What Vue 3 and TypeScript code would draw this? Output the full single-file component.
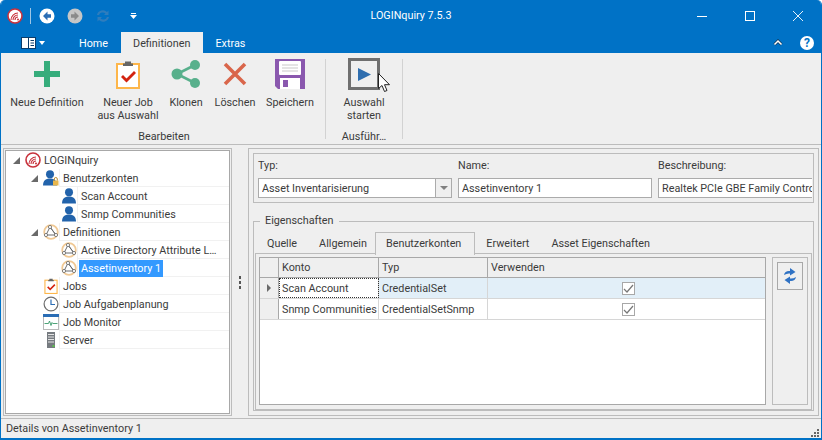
<script setup lang="ts">
import { ref } from 'vue'

interface TreeRow {
  label: string
  level: number
  icon: string
  arrow?: boolean
  selected?: boolean
}

interface RibbonItem {
  lines: string[]
  icon: string
  width: number
}

const treeRows: TreeRow[] = [
  { label: 'LOGINquiry', level: 0, icon: 'logo', arrow: true },
  { label: 'Benutzerkonten', level: 1, icon: 'userlock', arrow: true },
  { label: 'Scan Account', level: 2, icon: 'user' },
  { label: 'Snmp Communities', level: 2, icon: 'user' },
  { label: 'Definitionen', level: 1, icon: 'net', arrow: true },
  { label: 'Active Directory Attribute L…', level: 2, icon: 'net' },
  { label: 'Assetinventory 1', level: 2, icon: 'net', selected: true },
  { label: 'Jobs', level: 1, icon: 'job' },
  { label: 'Job Aufgabenplanung', level: 1, icon: 'clock' },
  { label: 'Job Monitor', level: 1, icon: 'monitor' },
  { label: 'Server', level: 1, icon: 'server' },
]

const editItems: RibbonItem[] = [
  { lines: ['Neue Definition'], icon: 'plus', width: 88 },
  { lines: ['Neuer Job', 'aus Auswahl'], icon: 'job', width: 74 },
  { lines: ['Klonen'], icon: 'share', width: 42 },
  { lines: ['Löschen'], icon: 'cross', width: 56 },
  { lines: ['Speichern'], icon: 'save', width: 54 },
]

const tabs = ['Quelle', 'Allgemein', 'Benutzerkonten', 'Erweitert', 'Asset Eigenschaften']
const ribbonTabs = ['Home', 'Definitionen', 'Extras']
const activeTab = ref('Benutzerkonten')
const activeRibbon = ref('Definitionen')

const gridRows = [
  { konto: 'Scan Account', typ: 'CredentialSet', current: true },
  { konto: 'Snmp Communities', typ: 'CredentialSetSnmp', current: false },
]
</script>

<template>
  <div class="Window">
    <svg class="defs">
      <symbol id="i-logo" viewBox="0 0 16 16">
        <circle cx="8" cy="8" r="7" fill="#fff" stroke="#c8323c" stroke-width="1.6"/>
        <path d="M4 12a7 7 0 0 1 7-7M6 12a5 5 0 0 1 5-5M8 12a3 3 0 0 1 3-3" fill="none" stroke="#c8323c" stroke-width="1.1"/>
        <circle cx="11" cy="11.5" r="1" fill="#c8323c"/>
      </symbol>
      <symbol id="i-user" viewBox="0 0 16 16">
        <circle cx="8" cy="4.2" r="4" fill="#2263ab"/>
        <path d="M1 15.500c0-4.500 2.500-7 7-7s7 2.500 7 7z" fill="#2263ab"/>
      </symbol>
      <symbol id="i-userlock" viewBox="0 0 16 16">
        <circle cx="7" cy="4.200" r="4" fill="#2263ab"/>
        <path d="M0 15.500c0-4.500 2.500-7 7-7s7 2.500 7 7z" fill="#2263ab"/>
        <rect x="10" y="10.500" width="5.500" height="5" fill="#e8b64c"/>
        <path d="M11.300 10.500V9a1.500 1.500 0 0 1 3 0v1.500" fill="none" stroke="#b98b2e"/>
      </symbol>
      <symbol id="i-net" viewBox="0 0 16 16">
        <circle cx="8" cy="8" r="6.800" fill="none" stroke="#f0c995" stroke-width="1.800"/>
        <path d="M7 3l-4 8h10zM7 3l6 8" fill="none" stroke="#6d6d6d" stroke-width="1"/>
        <circle cx="7" cy="3" r="1.600" fill="#fff" stroke="#666" stroke-width=".8"/>
        <circle cx="3" cy="11" r="1.600" fill="#fff" stroke="#666" stroke-width=".8"/>
        <circle cx="13" cy="11" r="1.600" fill="#fff" stroke="#666" stroke-width=".8"/>
      </symbol>
      <symbol id="i-job" viewBox="0 0 24 29">
        <rect x="1" y="4" width="22" height="24" fill="#fff" stroke="#fdb64a" stroke-width="2"/>
        <path d="M9 3.500V1.500h6v2h2V6H7V3.500z" fill="#666"/>
        <path d="M5 17l2-2 3.500 3.500L18 11l2 2-9.500 9.500z" fill="#d3230f"/>
      </symbol>
      <symbol id="i-clock" viewBox="0 0 16 16">
        <circle cx="8" cy="8" r="6.900" fill="#fff" stroke="#6d6d6d" stroke-width="1.200"/>
        <path d="M8 3.500V8.500h4" fill="none" stroke="#2a6db5" stroke-width="1.200"/>
      </symbol>
      <symbol id="i-monitor" viewBox="0 0 16 16">
        <rect x=".5" y=".5" width="15" height="15" fill="#fff" stroke="#b9b9b9"/>
        <rect x="0" y="0" width="16" height="3" fill="#2a6db5"/>
        <path d="M1.500 9.500h4l1-2.500 1.500 4.500 1-3 .8 1h4.700" fill="none" stroke="#3a9a6a" stroke-width=".9"/>
      </symbol>
      <symbol id="i-server" viewBox="0 0 16 16">
        <rect x="4" y="0" width="8" height="16" fill="#767b80"/>
        <path d="M5 2.500h6M5 5h6M5 7.500h6M5 10h6" stroke="#e5e5e5" stroke-width="1"/>
        <rect x="9.500" y="13" width="2" height="2" fill="#5ac24a"/>
      </symbol>
      <symbol id="i-plus" viewBox="0 0 26 26">
        <path d="M10 0h6v10h10v6H16v10h-6V16H0v-6h10z" fill="#36ac7b"/>
      </symbol>
      <symbol id="i-share" viewBox="0 0 30 30">
        <path d="M24 6L6 15l18 9" fill="none" stroke="#58b08c" stroke-width="2.600"/>
        <circle cx="24" cy="6" r="5" fill="#58b08c"/>
        <circle cx="6" cy="15" r="5.500" fill="#58b08c"/>
        <circle cx="24" cy="24" r="5" fill="#58b08c"/>
      </symbol>
      <symbol id="i-cross" viewBox="0 0 24 24">
        <path d="M2 2l20 20M22 2L2 22" fill="none" stroke="#d9664b" stroke-width="3.600"/>
      </symbol>
      <symbol id="i-save" viewBox="0 0 30 30">
        <path d="M0 0h30v30H3l-3-3z" fill="#8a58ae"/>
        <rect x="4" y="2" width="22" height="14" rx="1" fill="#fff"/>
        <path d="M7 6h16M7 9h16M7 12h16" stroke="#c9c9c9"/>
        <rect x="5" y="19" width="20" height="11" fill="#fff"/>
        <rect x="8" y="21" width="5" height="7" fill="#8a58ae"/>
      </symbol>
    </svg>

    <header class="Titlebar">
      <div class="qat">
        <svg class="qat-logo" width="16" height="16"><use href="#i-logo"/></svg>
        <span class="qat-sep"></span>
        <svg class="qat-btn" width="16" height="16" viewBox="0 0 16 16">
          <circle cx="8" cy="8" r="7.500" fill="#fff"/>
          <path d="M8.500 3.500L4 8l4.500 4.500V9.800H12V6.200H8.500z" fill="#2a6db5"/>
        </svg>
        <svg class="qat-btn" width="16" height="16" viewBox="0 0 16 16">
          <circle cx="8" cy="8" r="7.500" fill="#c6c6c6"/>
          <path d="M7.500 3.500L12 8l-4.500 4.500V9.800H4V6.200h3.500z" fill="#8a8a8a"/>
        </svg>
        <svg class="qat-btn" width="16" height="16" viewBox="0 0 16 16">
          <path d="M2 7a6 6 0 0 1 10-3l1.500-1.500V7H9l1.500-1.500A4 4 0 0 0 4 7zM14 9a6 6 0 0 1-10 3l-1.500 1.500V9H7l-1.500 1.500A4 4 0 0 0 12 9z" fill="#2f7dbd"/>
        </svg>
        <svg class="qat-more" width="7" height="6" viewBox="0 0 7 6">
          <path d="M1 0h5v1H1zM0 2h7L3.500 6z" fill="#fff"/>
        </svg>
      </div>
      <span class="title">LOGINquiry 7.5.3</span>
      <div class="wincontrols">
        <svg width="10" height="10" viewBox="0 0 10 10"><path d="M0 5.500h10" stroke="#fff"/></svg>
        <svg width="10" height="10" viewBox="0 0 10 10"><rect x=".5" y=".5" width="9" height="9" fill="none" stroke="#fff"/></svg>
        <svg width="10" height="10" viewBox="0 0 10 10"><path d="M0 0l10 10M10 0L0 10" stroke="#fff" stroke-width=".9"/></svg>
      </div>
    </header>

    <nav class="Ribbontabs">
      <div class="appmenu">
        <svg width="15" height="12" viewBox="0 0 15 12">
          <rect x=".5" y=".5" width="14" height="11" fill="#fff" stroke="#0b3c6a"/>
          <path d="M7.500 1v10M9.500 3.500h3.500M9.500 6h3.500M9.500 8.500h3.500" stroke="#0b3c6a"/>
        </svg>
        <svg width="6" height="4" viewBox="0 0 6 4"><path d="M0 0h6L3 4z" fill="#fff"/></svg>
      </div>
      <span
        v-for="t in ribbonTabs"
        :key="t"
        class="rtab"
        :class="{ active: t === activeRibbon }"
      >{{ t }}</span>
      <div class="ribbon-right">
        <svg width="10" height="7" viewBox="0 0 10 7"><path d="M1.500 5.500L5 2l3.500 3.500" fill="none" stroke="#123a5c" stroke-width="3"/><path d="M1.500 5.500L5 2l3.500 3.500" fill="none" stroke="#fff" stroke-width="1.500"/></svg>
        <span class="help">?</span>
      </div>
    </nav>

    <section class="Ribbon">
      <div class="rgroup edit">
        <div class="ritems">
          <div v-for="it in editItems" :key="it.icon" class="ritem" :style="{ width: it.width + 'px' }">
            <div class="ricon">
              <svg :class="'ic-' + it.icon"><use :href="'#i-' + it.icon"/></svg>
            </div>
            <span v-for="l in it.lines" :key="l">{{ l }}</span>
          </div>
        </div>
        <div class="rlabel">Bearbeiten</div>
      </div>
      <div class="rgroup run">
        <div class="ritems">
          <div class="ritem runitem">
            <div class="ricon">
              <div class="playbox">
                <svg width="13" height="13" viewBox="0 0 13 13"><path d="M0 0l13 6.500L0 13z" fill="#2f6eaf"/></svg>
              </div>
            </div>
            <span>Auswahl</span>
            <span>starten</span>
          </div>
        </div>
        <div class="rlabel">Ausführ…</div>
        <svg class="cursor" width="12" height="20" viewBox="0 0 12 20">
          <path d="M.5.500v15l3.500-3 2.500 6 2.500-1-2.500-5.800h5z" fill="#fff" stroke="#222"/>
        </svg>
      </div>
    </section>

    <main class="Body">
      <aside class="Tree">
        <div class="tree-inner">
          <div
            v-for="r in treeRows"
            :key="r.label"
            class="trow"
            :class="'lvl' + r.level"
          >
            <span class="arrow" :class="{ on: r.arrow }"></span>
            <svg class="ticon"><use :href="'#i-' + r.icon"/></svg>
            <span class="tcell"><span class="tlabel" :class="{ selected: r.selected }">{{ r.label }}</span></span>
          </div>
        </div>
      </aside>

      <div class="Splitter"><i></i><i></i><i></i></div>

      <div class="Detail">
        <div class="fields">
          <div class="field typ">
            <label>Typ:</label>
            <div class="combo">
              <span class="val">Asset Inventarisierung</span>
              <span class="drop"><i></i></span>
            </div>
          </div>
          <div class="field name">
            <label>Name:</label>
            <div class="combo"><span class="val">Assetinventory 1</span></div>
          </div>
          <div class="field desc">
            <label>Beschreibung:</label>
            <div class="combo open"><span class="val">Realtek PCIe GBE Family Controller</span></div>
          </div>
        </div>

        <fieldset class="props">
          <legend>Eigenschaften</legend>
          <div class="tabs">
            <span
              v-for="t in tabs"
              :key="t"
              class="tab"
              :class="{ active: t === activeTab }"
            >{{ t }}</span>
          </div>
          <div class="tabpage">
            <div class="grid">
              <div class="grow head">
                <span class="c0"></span>
                <span class="c1">Konto</span>
                <span class="c2">Typ</span>
                <span class="c3">Verwenden</span>
              </div>
              <div
                v-for="g in gridRows"
                :key="g.konto"
                class="grow data"
                :class="{ current: g.current }"
              >
                <span class="c0"><i v-if="g.current" class="marker"></i></span>
                <span class="c1">{{ g.konto }}</span>
                <span class="c2">{{ g.typ }}</span>
                <span class="c3">
                  <span class="check">
                    <svg width="11" height="9" viewBox="0 0 11 9"><path d="M1 5l3 3 6-7" fill="none" stroke="#777" stroke-width="1.200"/></svg>
                  </span>
                </span>
              </div>
            </div>
            <div class="side">
              <div class="refresh">
                <svg width="14" height="16" viewBox="0 0 14 16">
                  <path d="M1 7c.5-3 3-4.500 6-4V0l5.500 4L7 7.500V5.500c-2-.3-4 .2-6 1.500zM13 9c-.5 3-3 4.500-6 4v3L1.500 12 7 8.500v2c2 .3 4-.2 6-1.500z" fill="#2f72c4"/>
                </svg>
              </div>
            </div>
          </div>
        </fieldset>
      </div>
    </main>

    <footer class="Status">
      <span>Details von Assetinventory 1</span>
      <svg class="grip" width="9" height="9" viewBox="0 0 9 9">
        <path d="M6 0h2v2H6zM3 3h2v2H3zM6 3h2v2H6zM0 6h2v2H0zM3 6h2v2H3zM6 6h2v2H6z" fill="#666"/>
      </svg>
    </footer>
  </div>
</template>

<style scoped>
.Window {
  box-sizing: border-box;
  width: 822px;
  height: 440px;
  display: flex;
  flex-direction: column;
  background: #efefef;
  border: 1px solid #0072c6;
  border-top: none;
  border-bottom-width: 2px;
  border-radius: 5px 5px 0 0;
  overflow: hidden;
  font-family: Roboto, sans-serif;
  font-size: 10.8px;
  color: #3b3b3b;
}
.defs {
  display: none;
}

.Titlebar {
  flex: 0 0 32px;
  min-height: 0;
  background: #0072c6;
  display: flex;
  align-items: center;
  position: relative;
  color: #fff;
}
.qat {
  display: flex;
  align-items: center;
  padding-left: 6px;
}
.qat-sep {
  width: 1px;
  height: 16px;
  background: #9dc6e6;
  margin: 0 8px 0 7px;
}
.qat-btn {
  margin-right: 12px;
}
.qat-more {
  margin-left: 7px;
}
.title {
  position: absolute;
  left: 0;
  right: 0;
  text-align: center;
  top: 9px;
}
.wincontrols {
  margin-left: auto;
  display: flex;
  gap: 38px;
  padding-right: 18px;
}

.Ribbontabs {
  flex: 0 0 21px;
  min-height: 0;
  overflow: hidden;
  background: #0072c6;
  display: flex;
  color: #fff;
  align-items: stretch;
}
.appmenu {
  width: 46px;
  padding-left: 20px;
  display: flex;
  align-items: center;
  gap: 3px;
}
.rtab {
  padding: 0 12px;
  line-height: 23px;
}
.rtab.active {
  background: #efefef;
  color: #3b3b3b;
  margin-left: 1px;
  padding-right: 13px;
}
.ribbon-right {
  margin-left: auto;
  display: flex;
  align-items: center;
  gap: 17px;
  padding-right: 7px;
}
.help {
  width: 14px;
  height: 14px;
  border-radius: 50%;
  background: #fff;
  color: #0072c6;
  font-weight: 700;
  font-size: 12px;
  line-height: 14px;
  text-align: center;
}

.Ribbon {
  flex: 0 0 92px;
  min-height: 0;
  display: flex;
  background: #efefef;
  border-bottom: 1px solid #bcbcbc;
  box-sizing: border-box;
  padding: 6px 0 5px 2px;
}
.rgroup {
  display: flex;
  flex-direction: column;
  border-right: 1px solid #d2d2d2;
  position: relative;
}
.rgroup.edit {
  width: 322px;
}
.rgroup.run {
  width: 76px;
}
.ritems {
  display: flex;
  flex: 1;
}
.ritem {
  display: flex;
  flex-direction: column;
  align-items: center;
  line-height: 13px;
  white-space: nowrap;
}
.ricon {
  height: 30px;
  margin-bottom: 7px;
  display: flex;
  align-items: center;
  justify-content: center;
}
.ricon svg {
  display: block;
}
.ic-plus { width: 26px; height: 26px; }
.ic-job { width: 24px; height: 29px; }
.ic-share { width: 30px; height: 30px; }
.ic-cross { width: 24px; height: 24px; }
.ic-save { width: 30px; height: 30px; }
.rlabel {
  text-align: center;
  line-height: 14px;
  margin-bottom: -5px;
}
.runitem {
  width: 76px;
}
.playbox {
  box-sizing: border-box;
  width: 32px;
  height: 32px;
  border: 3px solid #6f6f6f;
  display: flex;
  align-items: center;
  justify-content: center;
}
.cursor {
  position: absolute;
  left: 52px;
  top: 14px;
}

.Body {
  flex: 1;
  min-height: 0;
  display: flex;
  padding: 3px 2px 2px 2px;
}
.Tree {
  box-sizing: border-box;
  width: 229px;
  border: 1px solid #bcbcbc;
  padding: 1px;
}
.tree-inner {
  box-sizing: border-box;
  height: 100%;
  background: #fff;
  border: 1px solid #a8a8a8;
}
.trow {
  display: flex;
  height: 18px;
  align-items: stretch;
}
.arrow {
  flex: 0 0 9px;
  align-self: center;
}
.arrow.on {
  width: 0;
  height: 0;
  flex: 0 0 0;
  border-bottom: 7px solid #6a6a6a;
  border-left: 7px solid transparent;
  margin-right: 2px;
}
.lvl0 { padding-left: 7px; }
.lvl1 { padding-left: 25px; }
.lvl2 { padding-left: 43px; }
.ticon {
  width: 16px;
  height: 16px;
  margin: 1px 0 0 3px;
  flex: none;
}
.tcell {
  flex: 1;
  min-width: 0;
  display: flex;
  align-items: center;
  border-left: 1px solid #f1f1f1;
  border-bottom: 1px solid #f1f1f1;
  padding: 1px 0 0 1px;
  white-space: nowrap;
}
.lvl0 .tcell {
  border: none;
  padding: 0 0 0 1px;
}
.tlabel {
  line-height: 17px;
  padding: 0 2px;
}
.tlabel.selected {
  background: #3399ff;
  color: #fff;
}

.Splitter {
  flex: 0 0 16px;
  display: flex;
  flex-direction: column;
  align-items: center;
  justify-content: center;
  gap: 2px;
}
.Splitter i {
  width: 2px;
  height: 3px;
  background: #555;
}

.Detail {
  box-sizing: border-box;
  flex: 1;
  min-width: 0;
  border: 1px solid #bcbcbc;
  padding: 4px;
  display: flex;
  flex-direction: column;
}
.fields {
  box-sizing: border-box;
  flex: 0 0 50px;
  border: 1px solid #bcbcbc;
  display: grid;
  grid-template-columns: 194px 194px 154px;
  column-gap: 6px;
  padding: 3px 0 0 4px;
  overflow: hidden;
}
.field label {
  display: block;
  height: 21px;
  line-height: 18px;
}
.combo {
  box-sizing: border-box;
  height: 20px;
  background: #fff;
  border: 1px solid #ababab;
  display: flex;
  line-height: 20px;
  padding-left: 3px;
  overflow: hidden;
  white-space: nowrap;
}
.combo.open {
  border-right: none;
}
.val {
  flex: 1;
  min-width: 0;
  overflow: hidden;
}
.drop {
  flex: 0 0 15px;
  border-left: 1px solid #ababab;
  background: #efefef;
  display: flex;
  align-items: center;
  justify-content: center;
}
.drop i {
  border-left: 4px solid transparent;
  border-right: 4px solid transparent;
  border-top: 4px solid #808080;
}

.props {
  flex: 1;
  min-height: 0;
  margin: 11px 0 0;
  padding: 4px 1px 0 1px;
  border: 1px solid #bcbcbc;
  display: flex;
  flex-direction: column;
}
.props legend {
  padding: 0 5px;
  margin-left: 5px;
  line-height: 14px;
}
.tabs {
  display: flex;
  height: 21px;
  padding-left: 1px;
  position: relative;
  z-index: 1;
}
.tab {
  padding: 0 11px;
  line-height: 23px;
  white-space: nowrap;
}
.tab.active {
  background: #efefef;
  border: 1px solid #bcbcbc;
  border-bottom: none;
  margin-left: -3px;
  padding: 0 13px 0 10px;
  height: 22px;
  line-height: 22px;
}
.tabpage {
  box-sizing: border-box;
  flex: 1;
  min-height: 0;
  border: 1px solid #bcbcbc;
  padding: 3px 3px 4px;
  display: flex;
  gap: 6px;
}
.grid {
  box-sizing: border-box;
  width: 507px;
  background: #fff;
  border: 1px solid #a8a8a8;
}
.grow {
  display: grid;
  grid-template-columns: 19px 100px 109px 1fr;
  height: 21px;
  line-height: 20px;
  box-sizing: border-box;
  border-bottom: 1px solid #d6d6d6;
}
.grow.head {
  height: 20px;
  background: #efefef;
  border-bottom: 1px solid #a8a8a8;
}
.grow > span {
  box-sizing: border-box;
  border-right: 1px solid #d6d6d6;
  padding-left: 3px;
  white-space: nowrap;
  overflow: hidden;
}
.grow.data > .c1,
.grow.data > .c2 {
  padding-top: 1px;
  line-height: 19px;
}
.grow > .c3 {
  border-right: none;
}
.grow.head > span {
  border-right: 1px solid #a8a8a8;
}
.grow.head > .c3 {
  border-right: none;
}
.grow.data > .c0 {
  background: #efefef;
  border-right: 1px solid #a8a8a8;
  display: flex;
  align-items: center;
  padding-left: 7px;
}
.grow.current > .c2,
.grow.current > .c3 {
  background: #e2eff8;
}
.grow.current > .c1 {
  outline: 1px dotted #333;
  outline-offset: -1px;
}
.marker {
  border-left: 4px solid #6a6a6a;
  border-top: 4px solid transparent;
  border-bottom: 4px solid transparent;
}
.grow.data > .c3 {
  display: flex;
  align-items: center;
  justify-content: center;
}
.check {
  box-sizing: border-box;
  width: 13px;
  height: 13px;
  background: #fff;
  border: 1px solid #a8a8a8;
  display: flex;
  align-items: center;
  justify-content: center;
}
.side {
  box-sizing: border-box;
  flex: 1;
  border: 1px solid #bcbcbc;
  padding: 4px;
}
.refresh {
  box-sizing: border-box;
  height: 28px;
  border: 1px solid #a8a8a8;
  display: flex;
  align-items: center;
  justify-content: center;
}

.Status {
  flex: 0 0 20px;
  box-sizing: border-box;
  border-top: 1px solid #bcbcbc;
  display: flex;
  align-items: center;
  justify-content: space-between;
  padding: 0 1px 0 5px;
}
.grip {
  align-self: flex-end;
}
</style>

<style>
html, body {
  margin: 0;
  background: #fff;
}
</style>
